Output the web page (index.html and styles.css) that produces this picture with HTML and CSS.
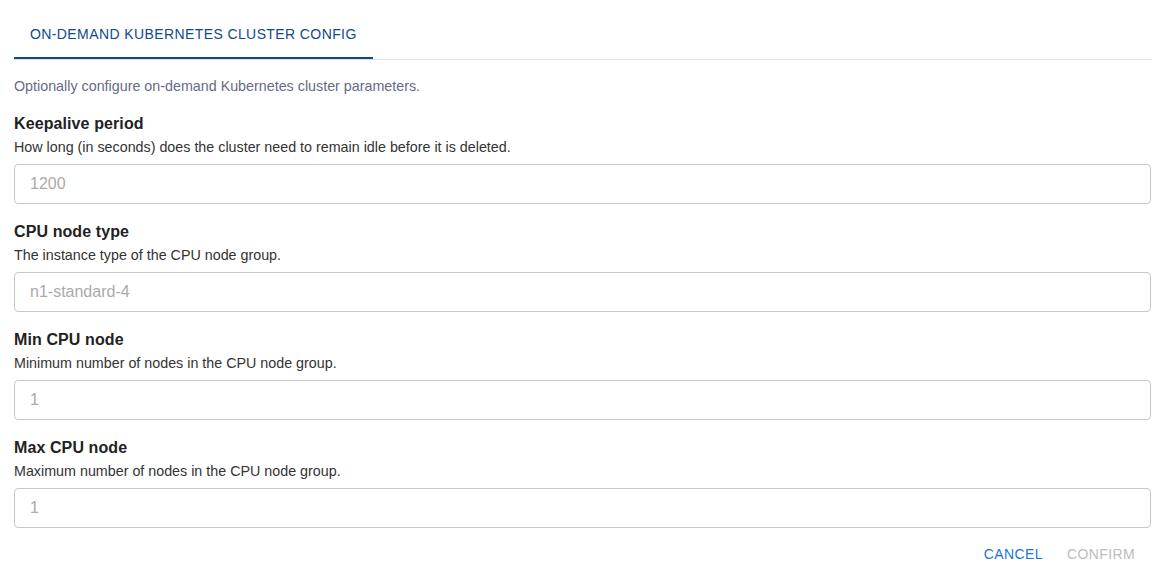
FILE: index.html
```html
<!DOCTYPE html>
<html>
<head>
<meta charset="utf-8">
<link rel="stylesheet" href="styles.css">
</head>
<body>
<div class="page">
  <div class="tabs">
    <div class="tab">On-demand Kubernetes cluster config</div>
  </div>
  <p class="intro">Optionally configure on-demand Kubernetes cluster parameters.</p>
  <div class="field">
    <div class="label">Keepalive period</div>
    <div class="help">How long (in seconds) does the cluster need to remain idle before it is deleted.</div>
    <input class="input" placeholder="1200">
  </div>
  <div class="field">
    <div class="label">CPU node type</div>
    <div class="help">The instance type of the CPU node group.</div>
    <input class="input" placeholder="n1-standard-4">
  </div>
  <div class="field">
    <div class="label">Min CPU node</div>
    <div class="help">Minimum number of nodes in the CPU node group.</div>
    <input class="input" placeholder="1">
  </div>
  <div class="field">
    <div class="label">Max CPU node</div>
    <div class="help">Maximum number of nodes in the CPU node group.</div>
    <input class="input" placeholder="1">
  </div>
  <div class="actions">
    <button class="btn btn-cancel">Cancel</button>
    <button class="btn btn-confirm">Confirm</button>
  </div>
</div>
</body>
</html>
```
FILE: styles.css
```css
* { box-sizing: border-box; }
html, body { margin: 0; padding: 0; background: #fff; }
body { font-family: "Liberation Sans", Arial, sans-serif; color: #222; }
.page { width: 1151px; padding-left: 14px; }
.tabs { display: flex; border-bottom: 1px solid #e0e0e0; height: 60px; }
.tab {
  height: 59px;
  padding: 11px 16px 0;
  display: flex; align-items: center;
  border-bottom: 2px solid #0b4a8f;
  color: #0e4a8c;
  font-size: 14px;
  text-transform: uppercase;
  letter-spacing: 0.4px;
}
.intro { margin: 16px 0 0; font-size: 14.3px; line-height: 20px; color: #666b85; }
.field { margin-top: 18px; }
.label { font-size: 16px; font-weight: bold; line-height: 20px; color: #222; letter-spacing: 0.1px; }
.help { margin-top: 4px; font-size: 14.3px; line-height: 18px; color: #333; }
.input {
  display: block; width: 100%; height: 40px; margin-top: 8px;
  border: 1px solid #c8c8c8; border-radius: 4px;
  padding: 0 15px;
  font-family: "Liberation Sans", Arial, sans-serif; font-size: 16px; color: #222;
  outline: none;
}
.input::placeholder { color: #aaa; }
.actions { display: flex; justify-content: flex-end; gap: 8px; margin-top: 8px; padding-right: 8px; }
.btn {
  height: 36px; padding: 0 8px; background: none; border: none;
  font-family: "Liberation Sans", Arial, sans-serif; font-size: 14px;
  text-transform: uppercase; letter-spacing: 0.4px;
}
.btn-cancel { color: #1a76d2; }
.btn-confirm { color: #bdbdbd; }
```
